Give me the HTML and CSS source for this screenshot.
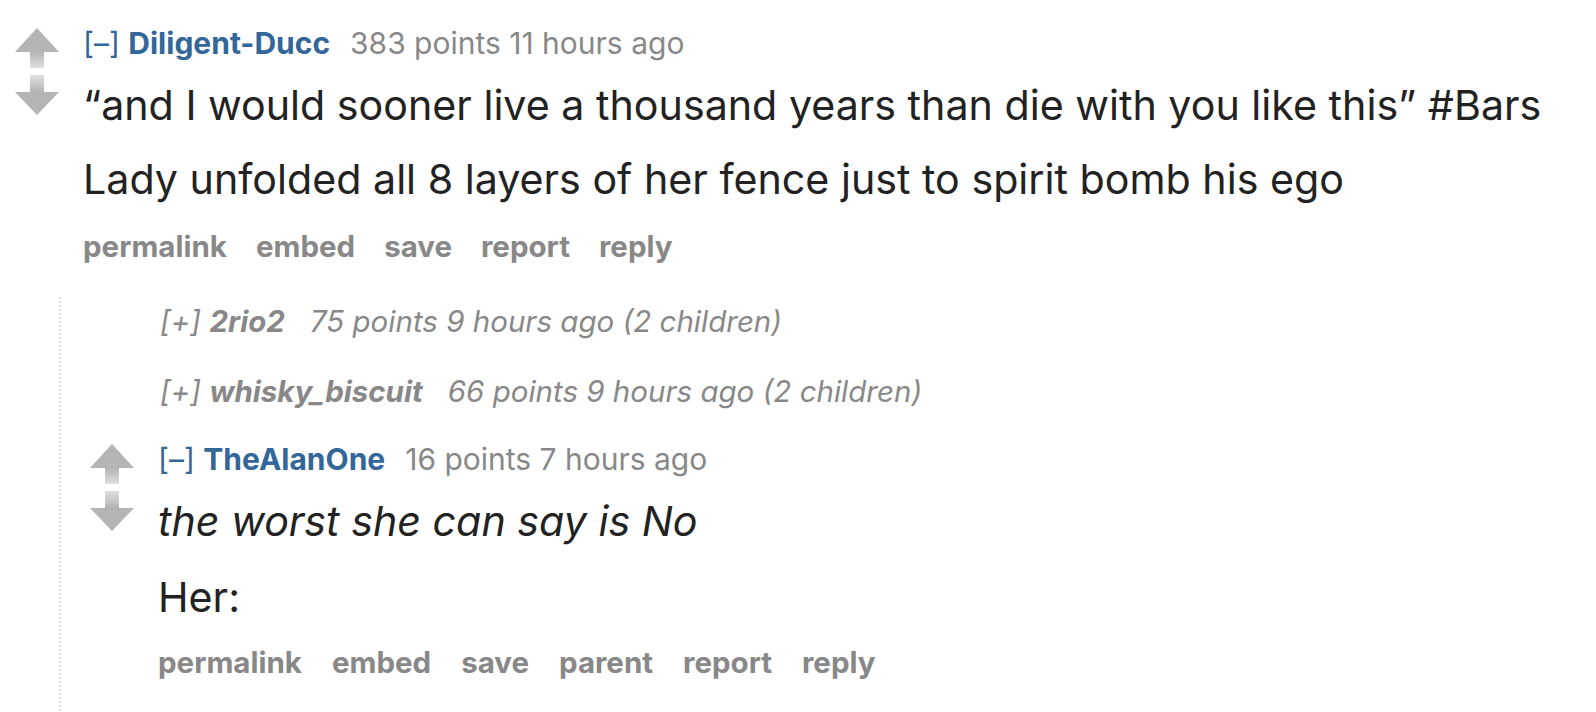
FILE: index.html
```html
<!DOCTYPE html>
<html>
<head>
<meta charset="utf-8">
<link rel="stylesheet" href="styles.css">
</head>
<body>
<div class="page">
  <div class="comment top">
    <div class="midcol">
      <svg class="arrows" width="44" height="88" viewBox="0 0 44 88">
        <defs>
          <linearGradient id="gu" x1="0" y1="0" x2="0" y2="1">
            <stop offset="0" stop-color="#b4b4b4"/>
            <stop offset="1" stop-color="#e0e0e0"/>
          </linearGradient>
          <linearGradient id="gd" x1="0" y1="0" x2="0" y2="1">
            <stop offset="0" stop-color="#e0e0e0"/>
            <stop offset="1" stop-color="#b4b4b4"/>
          </linearGradient>
        </defs>
        <polygon points="22,0 44,24 0,24" fill="#b4b4b4"/>
        <rect x="15" y="24" width="14" height="16" fill="url(#gu)"/>
        <rect x="15" y="47" width="14" height="17" fill="url(#gd)"/>
        <polygon points="0,64 44,64 22,87" fill="#b4b4b4"/>
      </svg>
    </div>
    <div class="entry">
      <p class="tagline"><span class="expand">[–]</span> <span class="author">Diligent-Ducc</span><span class="score">383 points</span> <span class="time">11 hours ago</span></p>
      <div class="md">
        <p>“and I would sooner live a thousand years than die with you like this” #Bars</p>
        <p>Lady unfolded all 8 layers of her fence just to spirit bomb his ego</p>
      </div>
      <ul class="buttons">
        <li>permalink</li><li>embed</li><li>save</li><li>report</li><li>reply</li>
      </ul>
    </div>
  </div>
  <div class="child">
    <p class="collapsed"><span class="expand">[+]</span> <span class="author">2rio2</span><span class="score">75 points</span> 9 hours ago (2 children)</p>
    <p class="collapsed"><span class="expand">[+]</span> <span class="author">whisky_biscuit</span><span class="score">66 points</span> 9 hours ago (2 children)</p>
    <div class="comment nested">
      <div class="midcol">
        <svg class="arrows" width="44" height="88" viewBox="0 0 44 88">
          <polygon points="22,0 44,24 0,24" fill="#b4b4b4"/>
          <rect x="15" y="24" width="14" height="16" fill="url(#gu)"/>
          <rect x="15" y="47" width="14" height="17" fill="url(#gd)"/>
          <polygon points="0,64 44,64 22,87" fill="#b4b4b4"/>
        </svg>
      </div>
      <div class="entry">
        <p class="tagline"><span class="expand">[–]</span> <span class="author">TheAlanOne</span><span class="score">16 points</span> <span class="time">7 hours ago</span></p>
        <div class="md">
          <p><em>the worst she can say is No</em></p>
          <p>Her:</p>
        </div>
        <ul class="buttons">
          <li>permalink</li><li>embed</li><li>save</li><li>parent</li><li>report</li><li>reply</li>
        </ul>
      </div>
    </div>
  </div>
</div>
</body>
</html>
```

FILE: styles.css
```css
* { box-sizing: border-box; }
html, body { margin: 0; padding: 0; background: #fff; }
body { font-family: Inter, "Noto Sans", sans-serif; color: #222; }
.page { width: 1596px; height: 712px; overflow: hidden; padding-top: 26px; }

.comment { display: flex; align-items: flex-start; }
.midcol { flex: none; }
.arrows { display: block; margin-top: 2px; }
.top .midcol { padding-left: 15px; width: 83px; }
.nested .midcol { padding-left: 29px; width: 97px; }

.tagline { margin: 0; font-size: 30px; line-height: 34px; color: #888; }
.tagline .expand { color: #369; }
.tagline .author { color: #369; font-weight: 700; margin-right: 20px; }

.md { font-size: 41.2px; line-height: 50px; color: #222; }
.md p { margin: 20px 0 0; }
.md p + p { margin-top: 24px; }
.nested .md p + p { margin-top: 26px; }

.buttons { list-style: none; margin: 25px 0 0; padding: 0; display: flex; gap: 29px; font-size: 29.5px; line-height: 34px; font-weight: 700; color: #888; }
.nested .buttons { margin-top: 23px; gap: 30px; }

.child { margin-left: 59px; border-left: 2px dotted #d8d8fa; margin-top: 34px; padding-top: 7px; padding-bottom: 40px; }
.collapsed { margin: 0 0 36px; padding-left: 99px; font-size: 29.5px; line-height: 34px; font-style: italic; color: #888; }
.collapsed .author { font-weight: 700; color: #888; margin-right: 25px; }
.collapsed .expand { color: #888; }
.collapsed + .comment { margin-top: -2px; }
```
